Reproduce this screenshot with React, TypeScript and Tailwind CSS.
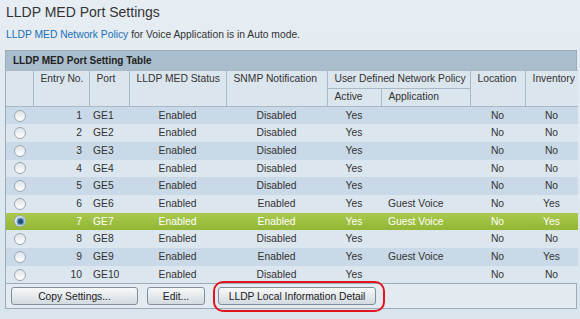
import { useState } from 'react'

type PortRow = {
  entry: number
  port: string
  status: string
  snmp: string
  active: string
  application: string
  location: string
  inventory: string
}

const rows: PortRow[] = [
  { entry: 1, port: 'GE1', status: 'Enabled', snmp: 'Disabled', active: 'Yes', application: '', location: 'No', inventory: 'No' },
  { entry: 2, port: 'GE2', status: 'Enabled', snmp: 'Disabled', active: 'Yes', application: '', location: 'No', inventory: 'No' },
  { entry: 3, port: 'GE3', status: 'Enabled', snmp: 'Disabled', active: 'Yes', application: '', location: 'No', inventory: 'No' },
  { entry: 4, port: 'GE4', status: 'Enabled', snmp: 'Disabled', active: 'Yes', application: '', location: 'No', inventory: 'No' },
  { entry: 5, port: 'GE5', status: 'Enabled', snmp: 'Disabled', active: 'Yes', application: '', location: 'No', inventory: 'No' },
  { entry: 6, port: 'GE6', status: 'Enabled', snmp: 'Enabled', active: 'Yes', application: 'Guest Voice', location: 'No', inventory: 'Yes' },
  { entry: 7, port: 'GE7', status: 'Enabled', snmp: 'Enabled', active: 'Yes', application: 'Guest Voice', location: 'No', inventory: 'Yes' },
  { entry: 8, port: 'GE8', status: 'Enabled', snmp: 'Disabled', active: 'Yes', application: '', location: 'No', inventory: 'No' },
  { entry: 9, port: 'GE9', status: 'Enabled', snmp: 'Enabled', active: 'Yes', application: 'Guest Voice', location: 'No', inventory: 'Yes' },
  { entry: 10, port: 'GE10', status: 'Enabled', snmp: 'Disabled', active: 'Yes', application: '', location: 'No', inventory: 'No' },
]

function Radio({ checked }: { checked: boolean }) {
  return (
    <span className="inline-flex size-[12px] items-center justify-center rounded-full border border-[#9aa6b0] bg-gradient-to-b from-[#dfe4e8] to-[#ffffff]">
      {checked && (
        <span className="size-[5px] rounded-full bg-[#1c4f7c] shadow-[0_0_0_1.5px_#6d9cc8]" />
      )}
    </span>
  )
}

const headCell =
  'border border-[#a9b9c7] px-[7px] align-top whitespace-nowrap text-left font-normal text-[#333]'

function Button({ label, className }: { label: string; className: string }) {
  return (
    <button
      type="button"
      className={`h-[18px] rounded-[3px] border border-[#7f8e9c] bg-gradient-to-b from-[#f7f9fa] to-[#d3dae0] text-center text-[10.3px] text-[#222] ${className}`}
    >
      {label}
    </button>
  )
}

export default function App() {
  const [selected, setSelected] = useState(7)

  return (
    <div className="h-[319px] w-[580px] overflow-hidden bg-gradient-to-b from-[#e6edf3] to-[#d9e4ec] font-['Liberation_Sans',Arial,sans-serif] text-[10.3px] text-[#333]">
      <h1 className="px-[6px] pt-[3px] text-[14px] leading-[18px] font-normal text-[#333]">
        LLDP MED Port Settings
      </h1>
      <p className="mt-[7px] px-[6px] leading-[14px]">
        <span className="text-[#1d6fb3]">LLDP MED Network Policy</span> for
        Voice Application is in Auto mode.
      </p>

      <div className="mt-[8px] ml-[5px] w-[572px] border border-[#9aabba]">
        <div className="flex h-[19px] items-center bg-[#a9bdcc] px-[7px] text-[10px] font-bold text-[#222]">
          LLDP MED Port Setting Table
        </div>

        <table className="w-[572px] table-fixed border-collapse">
          <colgroup>
            <col className="w-[27px]" />
            <col className="w-[56px]" />
            <col className="w-[40px]" />
            <col className="w-[97px]" />
            <col className="w-[101px]" />
            <col className="w-[54px]" />
            <col className="w-[89px]" />
            <col className="w-[55px]" />
            <col className="w-[53px]" />
          </colgroup>
          <thead className="bg-[#dbe5ed]">
            <tr className="h-[18px]">
              <th rowSpan={2} className={`${headCell} border-l-0`} />
              <th rowSpan={2} className={headCell}>Entry No.</th>
              <th rowSpan={2} className={headCell}>Port</th>
              <th rowSpan={2} className={headCell}>LLDP MED Status</th>
              <th rowSpan={2} className={headCell}>SNMP Notification</th>
              <th colSpan={2} className={headCell}>
                User Defined Network Policy
              </th>
              <th rowSpan={2} className={headCell}>Location</th>
              <th rowSpan={2} className={`${headCell} border-r-0`}>Inventory</th>
            </tr>
            <tr className="h-[18px]">
              <th className={headCell}>Active</th>
              <th className={headCell}>Application</th>
            </tr>
          </thead>
          <tbody>
            {rows.map((row, i) => {
              const isSel = row.entry === selected
              const bg = isSel
                ? 'bg-gradient-to-b from-[#a9c94c] to-[#92b534] text-white'
                : i % 2 === 0
                  ? 'bg-[#c9d9e7]'
                  : 'bg-[#dce6ef]'
              return (
                <tr
                  key={row.entry}
                  className={`h-[17.7px] cursor-pointer ${bg}`}
                  onClick={() => setSelected(row.entry)}
                >
                  <td className="pl-[8px]">
                    <span className="flex items-center">
                      <Radio checked={isSel} />
                    </span>
                  </td>
                  <td className="pr-[7px] text-right">{row.entry}</td>
                  <td className="pl-[4px]">{row.port}</td>
                  <td className="text-center">{row.status}</td>
                  <td className="text-center">{row.snmp}</td>
                  <td className="text-center">{row.active}</td>
                  <td className="pl-[7px]">{row.application}</td>
                  <td className="text-center">{row.location}</td>
                  <td className="text-center">{row.inventory}</td>
                </tr>
              )
            })}
          </tbody>
        </table>

        <div className="flex h-[25px] items-center gap-[9px] border-t border-[#9aabba] bg-[#e3eaf0] pl-[5px]">
          <Button label="Copy Settings..." className="w-[127px]" />
          <Button label="Edit..." className="w-[58px]" />
          <span className="relative ml-[4px] inline-flex">
            <Button label="LLDP Local Information Detail" className="w-[158px]" />
            <span className="pointer-events-none absolute -top-[6px] -right-[9px] -bottom-[7px] -left-[5px] rounded-[10px] border-[2.5px] border-[#e2141f]" />
          </span>
        </div>
      </div>
    </div>
  )
}
